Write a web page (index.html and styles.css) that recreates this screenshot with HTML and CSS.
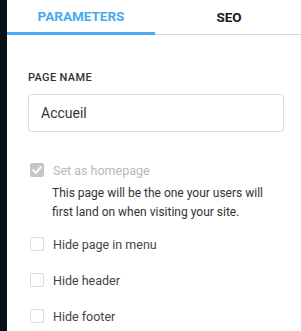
FILE: index.html
```html
<!DOCTYPE html>
<html>
<head>
<meta charset="utf-8">
<link rel="stylesheet" href="styles.css">
</head>
<body>
<div class="app">
  <div class="strip"></div>
  <div class="panel">
    <div class="tabs">
      <div class="tab active">PARAMETERS</div>
      <div class="tab">SEO</div>
    </div>
    <div class="content">
      <div class="label">PAGE NAME</div>
      <div class="input">Accueil</div>
      <div class="option disabled">
        <span class="box checked">
          <svg width="14" height="14" viewBox="0 0 14 14"><path d="M3.2 7.2 L5.9 9.9 L10.9 4.2" fill="none" stroke="#fff" stroke-width="1.8" stroke-linecap="round" stroke-linejoin="round"/></svg>
        </span>
        <span class="opt-text">Set as homepage</span>
      </div>
      <p class="desc">This page will be the one your users will first land on when visiting your site.</p>
      <div class="option"><span class="box"></span><span class="opt-text">Hide page in menu</span></div>
      <div class="option"><span class="box"></span><span class="opt-text">Hide header</span></div>
      <div class="option"><span class="box"></span><span class="opt-text">Hide footer</span></div>
    </div>
  </div>
</div>
</body>
</html>
```
FILE: styles.css
```css
* { box-sizing: border-box; }
html, body { margin: 0; padding: 0; background: #fff; }
body { font-family: Roboto, "Noto Sans", sans-serif; color: #333; }
.app { display: flex; width: 301px; height: 331px; overflow: hidden; }
.strip { width: 7px; flex: none; background: #0b1118; }
.panel { flex: 1; display: flex; flex-direction: column; }
.tabs { display: flex; height: 35px; border-bottom: 1px solid #cfdbe4; }
.tab { width: 148px; text-align: center; font-weight: 700; font-size: 13.5px; line-height: 34px; color: #16181b; }
.tab.active { color: #4aa9ef; border-bottom: 3px solid #4aa9ef; margin-bottom: -1px; line-height: 32px; height: 35px; }
.tab + .tab { flex: 1; }
.content { padding: 36px 19px 0 21px; }
.label { font-size: 11px; font-weight: 500; line-height: 14px; color: #2f3338; letter-spacing: 0.35px; }
.input { margin-top: 9px; height: 38px; border: 1px solid #d3dde4; border-radius: 3px; padding-left: 12px; font-size: 14px; line-height: 36px; color: #333; }
.option { display: flex; align-items: center; gap: 9px; height: 16px; margin-top: 20px; font-size: 12.5px; color: #444; }
.option.disabled { margin-top: 30px; color: #b8b8b8; }
.box { width: 14px; height: 14px; border: 1.5px solid #d4dee6; border-radius: 2px; margin-left: 2px; flex: none; }
.box.checked { background: #c6c6c6; border-color: #c6c6c6; display: flex; align-items: center; justify-content: center; }
.box.checked svg { flex: none; }
.desc { margin: 6px 12px 0 24px; font-size: 12px; line-height: 19px; color: #333; }
.desc + .option { margin-top: 14px; }
```
